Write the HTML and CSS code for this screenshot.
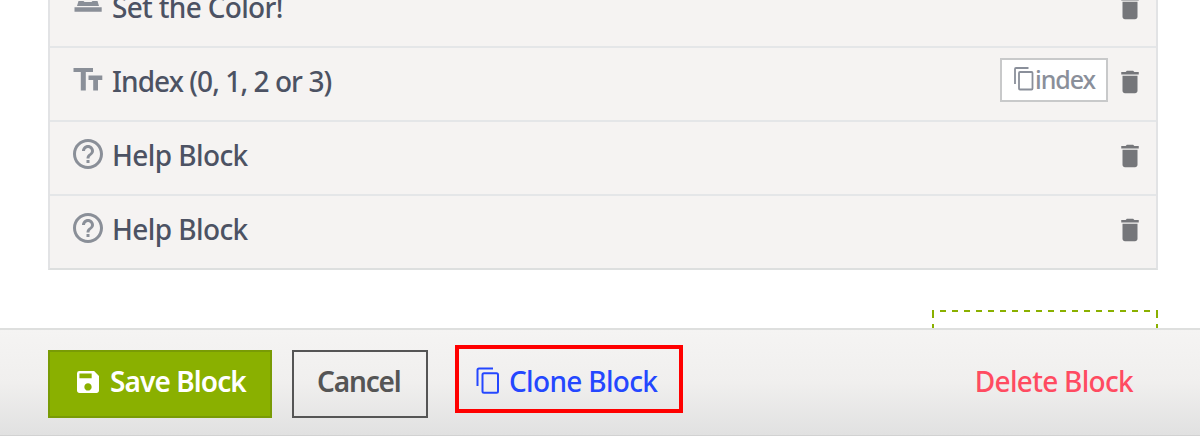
FILE: index.html
```html
<!DOCTYPE html>
<html lang="en">
<head>
<meta charset="utf-8">
<title>Edit Block</title>
<link rel="stylesheet" href="styles.css">
</head>
<body>
<svg class="defs" aria-hidden="true">
  <symbol id="trash" viewBox="0 0 24 24"><path d="M6 19c0 1.100.9 2 2 2h8c1.100 0 2-.9 2-2V7H6v12zM19 4h-3.500l-1-1h-5l-1 1H5v2h14V4z"/></symbol>
  <symbol id="help" viewBox="0 0 24 24"><path d="M11 18h2v-2h-2v2zm1-16C6.480 2 2 6.480 2 12s4.480 10 10 10 10-4.480 10-10S17.520 2 12 2zm0 18c-4.410 0-8-3.590-8-8s3.590-8 8-8 8 3.590 8 8-3.590 8-8 8zm0-14c-2.210 0-4 1.790-4 4h2c0-1.100.9-2 2-2s2 .9 2 2c0 2-3 1.750-3 5h2c0-2.250 3-2.500 3-5 0-2.210-1.790-4-4-4z"/></symbol>
</svg>
<main class="page">
  <section class="fields">
    <div class="row">
      <svg class="kind" viewBox="0 0 36 36"><path d="M8.500 13h5l1 1h7l1-1h5L29 18H7zM4.500 19.200h27.200v4.500H4.500z"/></svg>
      <span class="label color">Set the Color!</span>
      <svg class="trash"><use href="#trash"/></svg>
    </div>
    <div class="row">
      <svg class="kind" viewBox="0 0 36 36"><path d="M3.500 6H23v4h-7.200v18.500h-5V10H3.500zM18.500 13.500h13.800V18H28v10.500h-4.800V18h-4.700z"/></svg>
      <span class="label index">Index (0, 1, 2 or 3)</span>
      <span class="badge"><svg class="copy" viewBox="0 0 20 24"><path d="M1 17V2q0-1 1-1h12.500M6 5h11.500q1 0 1 1v15.500q0 1-1 1H6q-1 0-1-1V6q0-1 1-1z"/></svg><span class="tag">index</span></span>
      <svg class="trash"><use href="#trash"/></svg>
    </div>
    <div class="row">
      <svg class="kind"><use href="#help"/></svg>
      <span class="label help">Help Block</span>
      <svg class="trash"><use href="#trash"/></svg>
    </div>
    <div class="row">
      <svg class="kind"><use href="#help"/></svg>
      <span class="label help">Help Block</span>
      <svg class="trash"><use href="#trash"/></svg>
    </div>
  </section>
  <div class="dropzone">
    <svg viewBox="0 0 226 18"><path d="M8 1h212" stroke-dasharray="6 6"/><path d="M1 0v8M1 14v4M225 0v8M225 14v4"/></svg>
  </div>
  <footer class="actions">
    <button class="btn save"><svg class="disk" viewBox="3 3 18 18"><path d="M17 3H5a2 2 0 0 0-2 2v14c0 1.100.9 2 2 2h14c1.100 0 2-.9 2-2V7l-4-4zm-5 16c-1.660 0-3-1.340-3-3s1.340-3 3-3 3 1.340 3 3-1.340 3-3 3zm3-10H5V5h10v4z"/></svg><span>Save Block</span></button>
    <button class="btn cancel"><span>Cancel</span></button>
    <button class="btn clone"><svg class="clone-icon" viewBox="0 0 24 27"><path d="M1.500 19V3q0-1.500 1.500-1.500h14M8 6.200h12.500q1.500 0 1.500 1.500v16.500q0 1.500-1.500 1.500H8q-1.500 0-1.500-1.500V7.700Q6.500 6.200 8 6.200z"/></svg><span>Clone Block</span></button>
    <button class="btn delete"><span>Delete Block</span></button>
  </footer>
</main>
</body>
</html>
```
FILE: styles.css
```css
* { box-sizing: border-box; }
body { margin: 0; background: #fff; font-family: "Noto Sans", sans-serif; overflow: hidden; }
svg { display: block; flex: none; }
.defs { display: none; }
.page { height: 436px; display: flex; flex-direction: column; overflow: hidden; }
.fields { flex: none; margin: -28px 42px 0 48px; border: 2px solid #e2e3e5; border-bottom-color: #dddfdf; background: #f5f3f2; }
.row { display: flex; align-items: center; height: 74px; padding: 0 11px 4px 20px; border-bottom: 2px solid #e4e6e8; }
.row:last-child { height: 72px; border-bottom: 0; }
.kind { width: 36px; height: 36px; margin-top: -4px; fill: #8a8f98; }
.label { margin: -2px 0 0 6px; font-size: 28px; line-height: 38px; font-weight: 500; color: #4c5263; white-space: nowrap; }
.color { letter-spacing: -0.680px; }
.index { letter-spacing: -0.920px; }
.help { letter-spacing: -0.600px; }
.trash { width: 30px; height: 30px; margin-left: auto; fill: #75767a; }
.badge { display: flex; align-items: center; width: 108px; height: 44px; margin: -4px 0 0 auto; padding-left: 12px; border: 2px solid #c8c9ca; background: #fff; }
.badge + .trash { margin-left: 7px; }
.copy { width: 20px; height: 24px; margin-top: -3px; fill: none; stroke: #8a8f9a; stroke-width: 1.800; }
.tag { margin: -2px 0 0 1px; font-size: 25px; line-height: 36px; font-weight: 500; letter-spacing: -1.100px; color: #8a8f9a; }
.dropzone { flex: none; width: 226px; height: 18px; margin: 40px 42px 0 auto; }
.dropzone svg { width: 226px; height: 18px; fill: none; stroke: #8ab000; stroke-width: 2; }
.actions { flex: none; display: flex; align-items: flex-start; height: 108px; padding: 20px 42px 0 48px; border-top: 2px solid #dedfde; border-bottom: 1px solid #d2d2d2; background: linear-gradient(#f5f4f3, #f0efee 50%, #e1e1e1); }
.btn { display: flex; align-items: center; height: 68px; margin: 0; padding: 0 0 6px; border: 2px solid transparent; background: none; font-family: inherit; font-size: 28px; line-height: 38px; white-space: nowrap; }
.save { width: 224px; padding-left: 27px; border-color: #799b05; background: #8ab000; color: #fff; font-weight: 600; letter-spacing: -0.900px; }
.disk { width: 22px; height: 22px; margin: 2px 11px 0 0; fill: #fff; }
.cancel { width: 136px; margin-left: 20px; padding-left: 23px; border-color: #555; color: #555; font-weight: 600; letter-spacing: -1.150px; }
.clone { width: 228px; margin: -5px 0 0 27px; padding: 4px 0 0 17px; border: 4px solid #f00; color: #2447ff; font-weight: 500; letter-spacing: -0.680px; }
.clone-icon { width: 24px; height: 27px; margin: -2px 9px 0 0; fill: none; stroke: #2447ff; stroke-width: 2; }
.delete { margin-left: auto; padding-right: 23px; color: #ff4b61; font-weight: 500; letter-spacing: -0.700px; }
```
